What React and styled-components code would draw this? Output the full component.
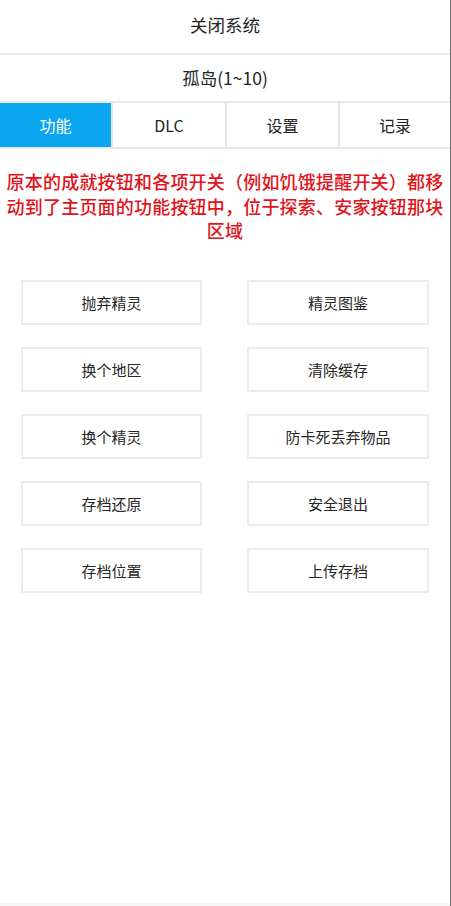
import React from "react";
import styled, { createGlobalStyle } from "styled-components";

const Global = createGlobalStyle`
  html, body { margin: 0; padding: 0; background: #ffffff; }
  body { font-family: "Noto Sans CJK SC", "Noto Sans", sans-serif; }
  * { box-sizing: border-box; }
`;

const Frame = styled.div`
  width: 451px;
  height: 906px;
  border-right: 1px solid #707070;
  display: flex;
  flex-direction: column;
  background: #fff;
`;

const TitleBar = styled.div`
  height: ${(p) => p.$h}px;
  padding-bottom: ${(p) => p.$lift}px;
  display: flex;
  align-items: center;
  justify-content: center;
  font-size: 17.5px;
  color: #222;
  border-bottom: 2px solid #e8e8e8;
`;

const Tabs = styled.div`
  display: grid;
  grid-template-columns: 111px 114px 113px 1fr;
  height: 46px;
  border-bottom: 2px solid #e8e8e8;
`;

const Tab = styled.div`
  display: flex;
  align-items: center;
  justify-content: center;
  font-size: 16px;
  color: ${(p) => (p.$active ? "#fff" : "#222")};
  background: ${(p) => (p.$active ? "#0aa6ef" : "#fff")};
  border-left: ${(p) => (p.$first ? "none" : "2px solid #e6e6e6")};
`;

const Notice = styled.p`
  margin: 20px 4px 0 4px;
  font-size: 18px;
  line-height: 24.5px;
  letter-spacing: 0.2px;
  color: #e3131b;
  text-align: center;
  font-weight: 500;
`;

const Grid = styled.div`
  display: grid;
  grid-template-columns: 181px 182px;
  column-gap: 45px;
  row-gap: 22px;
  padding: 37px 0 0 21px;
`;

const Btn = styled.div`
  height: 45px;
  border: 2px solid #ececec;
  display: flex;
  align-items: center;
  justify-content: center;
  font-size: 15px;
  color: #262626;
`;

const Spacer = styled.div`
  flex: 1;
`;

const Bottom = styled.div`
  height: 3px;
  background: #f6f6f6;
`;

const buttons = [
  "抛弃精灵", "精灵图鉴",
  "换个地区", "清除缓存",
  "换个精灵", "防卡死丢弃物品",
  "存档还原", "安全退出",
  "存档位置", "上传存档",
];

export default function App() {
  return (
    <>
      <Global />
      <Frame>
        <TitleBar $h={55} $lift={5}>关闭系统</TitleBar>
        <TitleBar $h={48} $lift={2}>孤岛(1~10)</TitleBar>
        <Tabs>
          <Tab $active $first>功能</Tab>
          <Tab>DLC</Tab>
          <Tab>设置</Tab>
          <Tab>记录</Tab>
        </Tabs>
        <Notice>
          原本的成就按钮和各项开关（例如饥饿提醒开关）都移动到了主页面的功能按钮中，位于探索、安家按钮那块区域
        </Notice>
        <Grid>
          {buttons.map((b) => (
            <Btn key={b}>{b}</Btn>
          ))}
        </Grid>
        <Spacer />
        <Bottom />
      </Frame>
    </>
  );
}
